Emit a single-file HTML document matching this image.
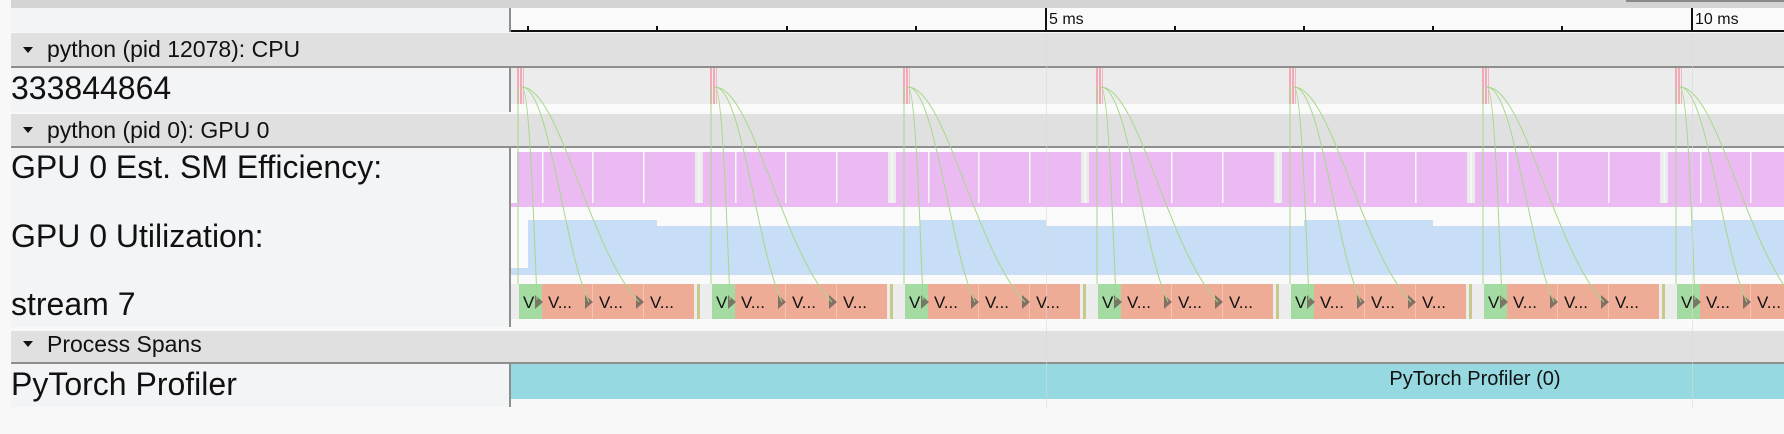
<!DOCTYPE html>
<html><head><meta charset="utf-8"><style>
html,body{margin:0;padding:0;width:1784px;height:434px;overflow:hidden;background:#f8f8f8;font-family:"Liberation Sans",Arial,sans-serif;}
svg{position:absolute;left:0;top:0}
</style></head><body>
<svg width="1784" height="434" viewBox="0 0 1784 434" xmlns="http://www.w3.org/2000/svg" font-family="Liberation Sans, Arial, sans-serif">
<defs>
<g id="cyc">
  <rect x="-2" y="68" width="2" height="36" fill="#f2a9b6"/>
  <rect x="1" y="68" width="2" height="36" fill="#f2a9b6"/>
  <rect x="4" y="68" width="1" height="36" fill="#f2b6c0"/>
  <rect x="176" y="152" width="8" height="51" fill="#ececec"/>
  <rect x="179.5" y="152" width="1.5" height="51" fill="#f8f8f8"/>
  <rect x="23" y="152" width="1.5" height="51" fill="#f8f8f8"/>
  <rect x="73" y="152" width="1.5" height="51" fill="#f8f8f8"/>
  <rect x="124" y="152" width="1.5" height="51" fill="#f8f8f8"/>
  <rect x="175" y="284" width="18" height="35" fill="#ececec"/>
  <rect x="0" y="284" width="23" height="35" fill="#a3dba2"/>
  <rect x="23" y="284" width="152" height="35" fill="#eeac96"/>
  <rect x="73" y="284" width="1" height="35" fill="#f4c4b4"/>
  <rect x="124" y="284" width="1" height="35" fill="#f4c4b4"/>
  <rect x="178" y="284" width="3" height="35" fill="#c5c98a"/>
  <polygon points="16,295 24,302 16,309" fill="#6e665a" opacity="0.85"/>
  <polygon points="66,295 74,302 66,309" fill="#6e665a" opacity="0.85"/>
  <polygon points="117,295 125,302 117,309" fill="#6e665a" opacity="0.85"/>
  <g stroke="#a6d88a" stroke-width="1" fill="none">
    <path d="M-1 87 L-1 284"/>
    <path d="M3 87 C10 87, 14 200, 18 300"/>
    <path d="M3 87 C30 87, 45 250, 70 302"/>
    <path d="M3 87 C40 87, 70 250, 120 302"/>
  </g>
</g>
</defs>

<rect x="11" y="0" width="1773" height="8" fill="#d4d4d4"/>
<rect x="1626" y="0" width="158" height="2" fill="#8a8a8a"/>
<rect x="11" y="8" width="499" height="24" fill="#f3f4f6"/>
<rect x="511" y="8" width="1273" height="24" fill="#fafafa"/>
<rect x="511" y="30" width="1273" height="2" fill="#111"/>
<g fill="#111">
<rect x="527" y="26" width="2" height="5"/><rect x="656" y="26" width="2" height="5"/><rect x="786" y="26" width="2" height="5"/><rect x="915" y="26" width="2" height="5"/>
<rect x="1045" y="8" width="2" height="23"/>
<rect x="1174" y="26" width="2" height="5"/><rect x="1303" y="26" width="2" height="5"/><rect x="1432" y="26" width="2" height="5"/><rect x="1561" y="26" width="2" height="5"/>
<rect x="1691" y="8" width="2" height="23"/>
</g>
<text x="1049" y="24" font-size="16" fill="#111">5 ms</text>
<text x="1695" y="24" font-size="16" fill="#111">10 ms</text>

<rect x="11" y="33" width="1773" height="33" fill="#e0e0e0"/>
<rect x="11" y="66" width="1773" height="2" fill="#8e8e8e"/>
<polygon points="23,47 33,47 28,53" fill="#111"/>
<text x="47" y="57" font-size="23" fill="#111">python (pid 12078): CPU</text>

<rect x="11" y="68" width="499" height="44" fill="#f3f4f6"/>
<rect x="511" y="68" width="1273" height="36" fill="#ececec"/>
<rect x="511" y="104" width="1273" height="8" fill="#fafafa"/>
<text x="11" y="99" font-size="32" fill="#111">333844864</text>

<rect x="11" y="114" width="1773" height="32" fill="#e0e0e0"/>
<rect x="11" y="146" width="1773" height="2" fill="#8e8e8e"/>
<polygon points="23,127 33,127 28,133" fill="#111"/>
<text x="47" y="138" font-size="23" fill="#111">python (pid 0): GPU 0</text>

<rect x="11" y="148" width="499" height="179" fill="#f3f4f6"/>
<rect x="511" y="148" width="1273" height="179" fill="#fafafa"/>
<rect x="517" y="152" width="1267" height="55" fill="#ecbaf2"/>
<rect x="511" y="203" width="1273" height="4" fill="#ecbaf2"/>
<g fill="#c8ddf6">
<rect x="511" y="268" width="17" height="7"/>
<rect x="528" y="220" width="129" height="55"/>
<rect x="657" y="226" width="263" height="49"/>
<rect x="920" y="220" width="126" height="55"/>
<rect x="1046" y="226" width="258" height="49"/>
<rect x="1304" y="220" width="129" height="55"/>
<rect x="1433" y="226" width="259" height="49"/>
<rect x="1692" y="220" width="92" height="55"/>
</g>
<rect x="511" y="284" width="8" height="35" fill="#ececec"/>
<text x="11" y="178" font-size="32" fill="#111">GPU 0 Est. SM Efficiency:</text>
<text x="11" y="247" font-size="32" fill="#111">GPU 0 Utilization:</text>
<text x="11" y="315" font-size="32" fill="#111">stream 7</text>

<use href="#cyc" x="519"/>
<use href="#cyc" x="712"/>
<use href="#cyc" x="905"/>
<use href="#cyc" x="1098"/>
<use href="#cyc" x="1291"/>
<use href="#cyc" x="1484"/>
<use href="#cyc" x="1677"/>

<g font-size="17" fill="#111">
<text x="523" y="308">V</text><text x="548" y="308">V...</text><text x="599" y="308">V...</text><text x="650" y="308">V...</text>
<text x="716" y="308">V</text><text x="741" y="308">V...</text><text x="792" y="308">V...</text><text x="843" y="308">V...</text>
<text x="909" y="308">V</text><text x="934" y="308">V...</text><text x="985" y="308">V...</text><text x="1036" y="308">V...</text>
<text x="1102" y="308">V</text><text x="1127" y="308">V...</text><text x="1178" y="308">V...</text><text x="1229" y="308">V...</text>
<text x="1295" y="308">V</text><text x="1320" y="308">V...</text><text x="1371" y="308">V...</text><text x="1422" y="308">V...</text>
<text x="1488" y="308">V</text><text x="1513" y="308">V...</text><text x="1564" y="308">V...</text><text x="1615" y="308">V...</text>
<text x="1681" y="308">V</text><text x="1706" y="308">V...</text><text x="1757" y="308">V...</text>
</g>

<rect x="11" y="331" width="1773" height="31" fill="#e0e0e0"/>
<rect x="11" y="362" width="1773" height="2" fill="#8e8e8e"/>
<polygon points="23,341 33,341 28,347" fill="#111"/>
<text x="47" y="352" font-size="23" fill="#111">Process Spans</text>

<rect x="11" y="364" width="499" height="43" fill="#f3f4f6"/>
<rect x="511" y="364" width="1273" height="35" fill="#96d9e0"/>
<text x="11" y="395" font-size="32" fill="#111">PyTorch Profiler</text>
<text x="1475" y="385" font-size="20" fill="#111" text-anchor="middle">PyTorch Profiler (0)</text>

<rect x="1046" y="33" width="1" height="374" fill="#d8d8d8" opacity="0.6"/>
<rect x="1692" y="33" width="1" height="374" fill="#d8d8d8" opacity="0.6"/>

<rect x="509" y="8" width="2" height="24" fill="#8e8e8e"/>
<rect x="509" y="68" width="2" height="44" fill="#8e8e8e"/>
<rect x="509" y="148" width="2" height="179" fill="#8e8e8e"/>
<rect x="509" y="364" width="2" height="43" fill="#8e8e8e"/>
</svg>
</body></html>
